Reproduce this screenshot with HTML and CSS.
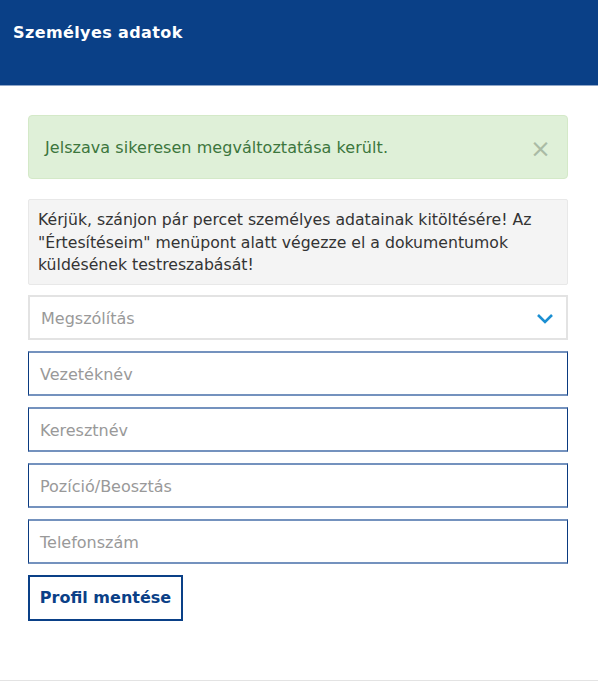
FILE: index.html
```html
<!DOCTYPE html>
<html lang="hu">
<head>
<meta charset="utf-8">
<title>Személyes adatok</title>
<link rel="stylesheet" href="styles.css">
</head>
<body>
<header class="topbar">
  <h1 class="title">Személyes adatok</h1>
</header>
<main class="content">
  <div class="alert">
    <span>Jelszava sikeresen megváltoztatása került.</span>
    <span class="close">×</span>
  </div>
  <div class="info">Kérjük, szánjon pár percet személyes adatainak kitöltésére! Az "Értesítéseim" menüpont alatt végezze el a dokumentumok küldésének testreszabását!</div>
  <div class="select">
    <span class="ph">Megszólítás</span>
    <svg class="chev" width="18" height="11" viewBox="0 0 18 11"><path d="M2 2 L9 9 L16 2" fill="none" stroke="#1b8fd2" stroke-width="2.6"/></svg>
  </div>
  <div class="field"><span class="ph">Vezetéknév</span></div>
  <div class="field"><span class="ph">Keresztnév</span></div>
  <div class="field"><span class="ph">Pozíció/Beosztás</span></div>
  <div class="field"><span class="ph">Telefonszám</span></div>
  <div class="actions"><button class="btn">Profil mentése</button></div>
</main>
<div class="footer-line"></div>
</body>
</html>
```
FILE: styles.css
```css
* { box-sizing: border-box; }
html, body { margin: 0; padding: 0; background: #fff; }
body {
  font-family: "DejaVu Sans", Verdana, sans-serif;
  width: 598px;
  height: 681px;
  display: flex;
  flex-direction: column;
}
.topbar {
  height: 86px;
  background: #0a4087;
  border-bottom: 1px solid #8fa6c8;
  padding: 23px 13px 0;
}
.title {
  margin: 0;
  color: #fff;
  font-size: 16px;
  font-weight: bold;
  letter-spacing: 0.4px;
}
.content {
  padding: 29px 30px 0 28px;
  display: flex;
  flex-direction: column;
  flex: 1;
}
.alert {
  height: 64px;
  background: #dff0d8;
  border: 1px solid #d4e9c8;
  border-radius: 4px;
  color: #3c763d;
  font-size: 16px;
  display: flex;
  align-items: center;
  justify-content: space-between;
  padding: 0 16px 0 16px;
  letter-spacing: 0.05px;
}
.close {
  color: #aabba5;
  font-size: 25px;
  font-weight: normal;
  margin-top: 2px;
}
.info {
  margin-top: 20px;
  background: #f4f4f4;
  border: 1px solid #e8e8e8;
  border-radius: 2px;
  color: #333;
  font-size: 15.7px;
  line-height: 22.5px;
  padding: 9px 10px 7px 9px;
}
.select {
  margin-top: 10px;
  height: 45px;
  border: 2px solid #e3e3e3;
  display: flex;
  align-items: center;
  justify-content: space-between;
  padding: 3px 12px 0 11px;
}
.ph {
  color: #999;
  font-size: 16px;
}
.field {
  margin-top: 11px;
  height: 45px;
  border-top: 2px solid #7492be;
  border-bottom: 2px solid #7492be;
  border-left: 1px solid #0a3a80;
  border-right: 1px solid #0a3a80;
  display: flex;
  align-items: center;
  padding: 3px 11px 0;
}
.actions { margin-top: 11px; }
.btn {
  height: 46px;
  width: 155px;
  background: #fff;
  border: 2px solid #0a4087;
  color: #0a4087;
  font-family: "DejaVu Sans", Verdana, sans-serif;
  font-weight: bold;
  font-size: 16px;
  padding: 0;
}
.footer-line {
  height: 1px;
  background: #e3e3e3;
}
```
